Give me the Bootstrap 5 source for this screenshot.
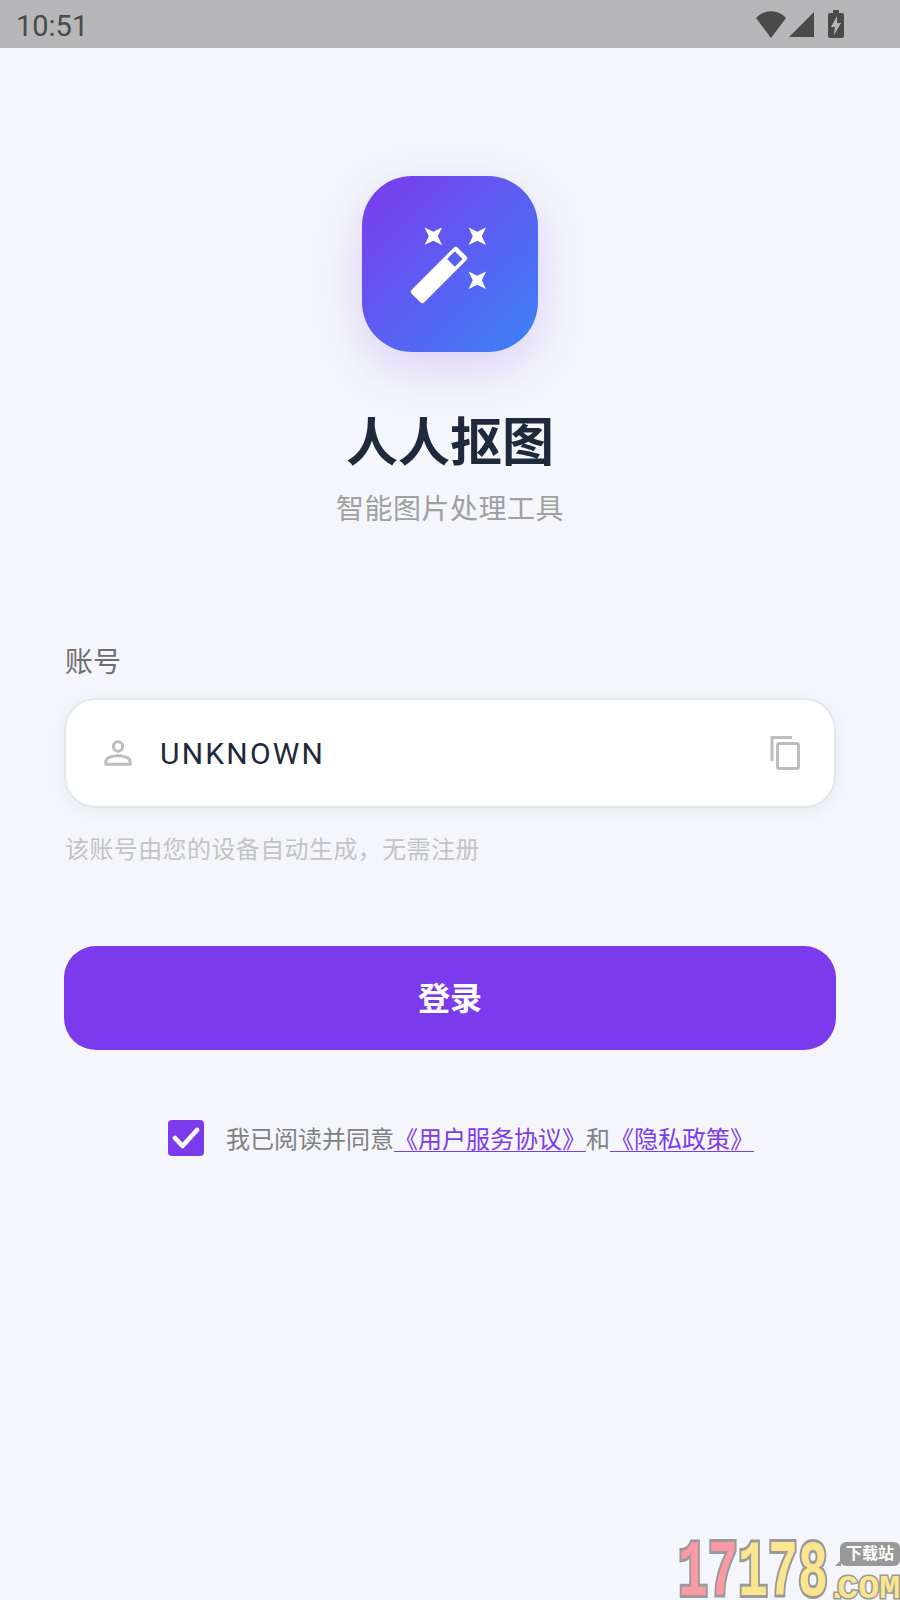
<!DOCTYPE html>
<html lang="zh-CN">
<head>
    <meta charset="UTF-8">
    <meta name="viewport" content="width=device-width, initial-scale=1.0">
    <title>人人抠图</title>
    <link href="https://cdn.jsdelivr.net/npm/bootstrap@5.3.0/dist/css/bootstrap.min.css" rel="stylesheet">
    <style>
        body { background: #f4f6fb; font-family: Roboto, "Noto Sans CJK SC", sans-serif; width: 900px; height: 1600px; overflow: hidden; position: relative; }
        .status-strip { height: 48px; background: #b7b7b9; color: #4a4a4a; padding: 0 56px 0 16px; }
        .status-time { font-size: 29px; line-height: 48px; padding-top: 3px; }
        .app-logo { width: 176px; height: 176px; margin-top: 128px; border-radius: 50px; background: linear-gradient(135deg, #7c3aed, #3b82f6); box-shadow: 0 16px 48px rgba(124, 58, 237, .2); }
        .app-title { font-size: 52px; font-weight: 700; line-height: 72px; color: #1e293b; margin: 56px 0 0; }
        .app-sub { font-size: 28px; line-height: 40px; letter-spacing: .5px; color: #a0a0a0; margin-top: 10px; }
        .login-form { padding: 0 64px; margin-top: 113px; }
        .field-label { font-size: 28px; line-height: 40px; color: #6e6e6e; margin: 0 0 15px 1px; display: block; }
        .account-box { height: 110px; background: #fff; border: 2px solid #e2e8f0; border-radius: 32px; box-shadow: 0 4px 16px rgba(30, 41, 59, .05); padding: 0 34px 0 38px; }
        .account-value { font-size: 30px; letter-spacing: 2.2px; color: #1e293b; margin-left: 28px; }
        .field-hint { font-size: 24px; line-height: 34px; letter-spacing: .4px; color: #c4c4c4; margin: 25px 0 0 1px; }
        .login-btn { width: 100%; height: 104px; margin-top: 79px; padding-top: 8px; border: 0; border-radius: 32px; background: #7c3aed; color: #fff; font-size: 32px; font-weight: 700; }
        .agree-row { margin-top: 70px; padding-left: 104px; font-size: 24px; line-height: 36px; color: #808080; }
        .agree-box { width: 36px; height: 36px; background: #7c3aed; border-radius: 4px; margin-right: 22px; }
        .agree-copy { padding-top: 2px; }
        .agree-row a { color: #7c3aed; text-decoration-thickness: 1px; text-underline-offset: 3px; }
        .wm-box { position: absolute; right: 0; bottom: 0; width: 226px; height: 64px; }
        .wm-num { position: absolute; left: 4px; top: 12px; font-family: "Liberation Mono", monospace; font-weight: 700; font-size: 80px; line-height: 52px; white-space: nowrap; transform: scaleX(.625); transform-origin: left top; -webkit-text-stroke: 6px #9a9a9a; paint-order: stroke fill; }
        .wm-pink { color: #fb9aa5; }
        .wm-yellow { color: #fbe58e; }
        .wm-tag { position: absolute; right: 0; top: 6px; width: 60px; height: 24px; background: #999; color: #fff; border-radius: 6px; font-size: 16px; line-height: 24px; text-align: center; font-weight: 700; }
        .wm-tag::after { content: ""; position: absolute; left: -5px; bottom: 0; border-left: 6px solid transparent; border-bottom: 6px solid #999; }
        .wm-com { position: absolute; right: 0; bottom: 0; font-family: "Liberation Mono", monospace; font-weight: 700; font-size: 33px; line-height: 20px; color: #fbe58e; white-space: nowrap; transform: scaleX(1.06); transform-origin: right top; -webkit-text-stroke: 3px #9a9a9a; paint-order: stroke fill; }
        .wm-dot { letter-spacing: -10px; }
    </style>
</head>
<body>
    <div class="status-strip d-flex justify-content-between align-items-center">
        <span class="status-time">10:51</span>
        <svg width="88" height="28" viewBox="0 0 88 28" fill="#4a4a4a">
            <path d="M0 8 C8 -1 22 -1 30 8 L15 28 Z"/>
            <path d="M33 27 L58 2 V27 Z"/>
            <path fill-rule="evenodd" d="M77 3 V0 H83 V3 H86 Q88 3 88 5 V26 Q88 28 86 28 H74 Q72 28 72 26 V5 Q72 3 74 3 Z M81 6 L75 17 H79 L78 25 L85 13 H81 Z"/>
        </svg>
    </div>

    <div class="d-flex flex-column align-items-center text-center">
        <div class="app-logo">
            <svg width="176" height="176" viewBox="0 0 176 176" fill="#fff">
                <path id="spark" d="M62.6 51.6 L71.3 55.8 L80 51.6 L75.8 60.3 L80 69 L71.3 64.8 L62.6 69 L66.8 60.3 Z"/>
                <use href="#spark" x="44"/>
                <use href="#spark" x="44" y="44"/>
                <path fill-rule="evenodd" d="M49.7 113.7 Q47.7 115.7 49.7 117.7 L58.3 126.3 Q60.3 128.3 62.3 126.3 L104.3 84.3 Q106.3 82.3 104.3 80.3 L95.7 71.7 Q93.7 69.7 91.7 71.7 Z M92.8 75.3 L100.5 83 L92.8 90.7 L85.1 83 Z"/>
            </svg>
        </div>
        <h1 class="app-title">人人抠图</h1>
        <div class="app-sub">智能图片处理工具</div>
    </div>

    <form class="login-form">
        <label class="field-label">账号</label>
        <div class="account-box d-flex align-items-center">
            <svg width="28" height="28" viewBox="0 0 30 28" fill="none" stroke="#bdbdbd" stroke-width="3.2">
                <circle cx="15" cy="7" r="5"/>
                <path d="M2 26 V23 C2 19 9 17 15 17 C21 17 28 19 28 23 V26 Z"/>
            </svg>
            <span class="account-value flex-grow-1">UNKNOWN</span>
            <svg width="30" height="34" viewBox="0 0 30 34" fill="none" stroke="#bdbdbd" stroke-width="3">
                <path d="M22 1.5 H2 V25"/>
                <rect x="7.5" y="7.5" width="21" height="25" rx="2"/>
            </svg>
        </div>
        <div class="field-hint">该账号由您的设备自动生成，无需注册</div>
        <button type="button" class="btn login-btn">登录</button>
        <div class="agree-row d-flex align-items-start">
            <span class="agree-box d-flex align-items-center justify-content-center">
                <svg width="28" height="24" viewBox="0 0 28 24" fill="none" stroke="#fff" stroke-width="4.6" stroke-linecap="round" stroke-linejoin="round"><path d="M3 12 L10.5 20 L25 4"/></svg>
            </span>
            <span class="agree-copy">我已阅读并同意<a href="#">《用户服务协议》</a>和<a href="#">《隐私政策》</a></span>
        </div>
    </form>

    <div class="wm-box">
        <span class="wm-num"><span class="wm-pink">17</span><span class="wm-yellow">178</span></span>
        <span class="wm-tag">下载站</span>
        <span class="wm-com"><span class="wm-dot">.</span>COM</span>
    </div>
</body>
</html>
